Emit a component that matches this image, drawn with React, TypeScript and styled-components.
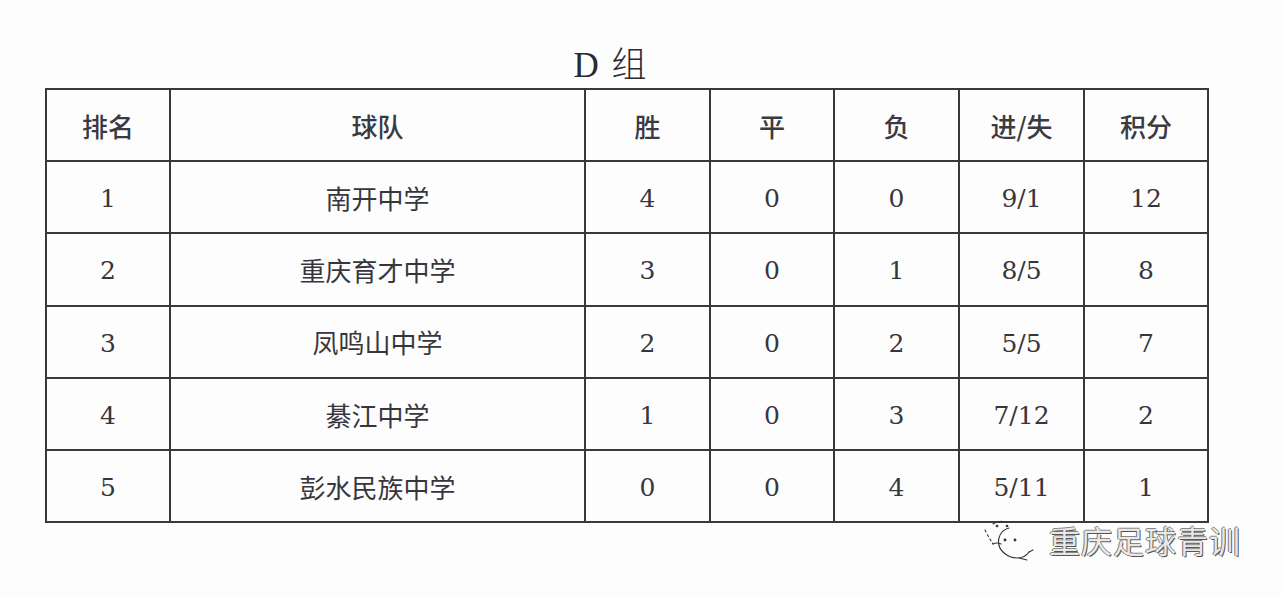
import React from "react";
import styled, { createGlobalStyle } from "styled-components";

const Global = createGlobalStyle`
  html, body { margin: 0; padding: 0; background: #fdfdfd; }
  body { width: 1282px; height: 598px; overflow: hidden; }
`;

const Page = styled.div`
  display: flex;
  flex-direction: column;
  padding: 42px 0 0 45px;
  width: 1162px;
`;

const Title = styled.h1`
  margin: 0 0 6px 0;
  height: 40px;
  line-height: 40px;
  text-align: center;
  padding-right: 30px;
  font-size: 35px;
  font-weight: 400;
  color: #2a2a33;
  font-family: "Liberation Serif", "Noto Sans CJK SC", serif;
  letter-spacing: 2px;
`;

const Han = styled.span`
  font-family: "Noto Sans CJK SC", sans-serif;
  font-weight: 300;
`;

const Table = styled.table`
  border-collapse: collapse;
  width: 1162px;
  table-layout: fixed;
  color: #333338;
`;

const Th = styled.th`
  border: 2px solid #3a3a3a;
  height: 70px;
  padding: 0;
  font-family: "Noto Sans CJK SC", sans-serif;
  font-size: 26px;
  font-weight: 500;
  color: #3a3a42;
  text-align: center;
  vertical-align: middle;
`;

const Td = styled.td<{ $cjk?: boolean }>`
  border: 2px solid #3a3a3a;
  height: 72.3px;
  padding: ${(p) => (p.$cjk ? "0" : "3px 0 0 0")};
  box-sizing: border-box;
  text-align: center;
  vertical-align: middle;
  font-family: ${(p) =>
    p.$cjk ? `"Noto Sans CJK SC", sans-serif` : `"DejaVu Serif", serif`};
  font-size: ${(p) => (p.$cjk ? "26px" : "25px")};
  font-weight: 400;
  color: #38363d;
`;

const Footer = styled.div`
  display: flex;
  justify-content: flex-end;
  align-items: center;
  gap: 10px;
  margin-top: -6px;
  margin-right: -34px;
`;

const Mark = styled.span`
  font-family: "Noto Sans CJK SC", sans-serif;
  font-size: 31px;
  font-weight: 400;
  color: #e8e8e8;
  letter-spacing: 1px;
  text-shadow: 1px 1px 0 #555, -1px 0 0 #777, 0 -1px 0 #888;
`;

const widths = [124, 415, 125, 124, 125, 125, 124];
const headers = ["排名", "球队", "胜", "平", "负", "进/失", "积分"];
const rows: [string, string, string, string, string, string, string][] = [
  ["1", "南开中学", "4", "0", "0", "9/1", "12"],
  ["2", "重庆育才中学", "3", "0", "1", "8/5", "8"],
  ["3", "凤鸣山中学", "2", "0", "2", "5/5", "7"],
  ["4", "綦江中学", "1", "0", "3", "7/12", "2"],
  ["5", "彭水民族中学", "0", "0", "4", "5/11", "1"],
];

const WeChatIcon = () => (
  <svg width="56" height="44" viewBox="0 0 56 44" fill="none" stroke="#333" strokeWidth="1.1" strokeLinecap="round">
    <path d="M10 6 Q16 2 24 4" strokeDasharray="3 3" />
    <path d="M2 12 Q6 20 10 26" strokeDasharray="2 3" />
    <path d="M26 10 Q18 12 16 20 Q14 28 20 34 Q26 40 34 40 Q42 40 46 34" />
    <path d="M10 26 Q14 24 18 26" />
    <path d="M46 34 L50 32" />
    <path d="M36 40 L44 42" />
    <circle cx="22" cy="22" r="0.9" fill="#333" />
    <circle cx="32" cy="22" r="0.9" fill="#333" />
    <circle cx="14" cy="8" r="0.8" fill="#333" />
    <circle cx="24" cy="8" r="0.8" fill="#333" />
  </svg>
);

export default function App() {
  return (
    <>
      <Global />
      <Page>
        <Title>
          D <Han>组</Han>
        </Title>
        <Table>
          <colgroup>
            {widths.map((w, i) => (
              <col key={i} style={{ width: w }} />
            ))}
          </colgroup>
          <thead>
            <tr>
              {headers.map((h) => (
                <Th key={h}>{h}</Th>
              ))}
            </tr>
          </thead>
          <tbody>
            {rows.map((r) => (
              <tr key={r[0]}>
                {r.map((c, i) => (
                  <Td key={i} $cjk={i === 1}>
                    {c}
                  </Td>
                ))}
              </tr>
            ))}
          </tbody>
        </Table>
        <Footer>
          <WeChatIcon />
          <Mark>重庆足球青训</Mark>
        </Footer>
      </Page>
    </>
  );
}
